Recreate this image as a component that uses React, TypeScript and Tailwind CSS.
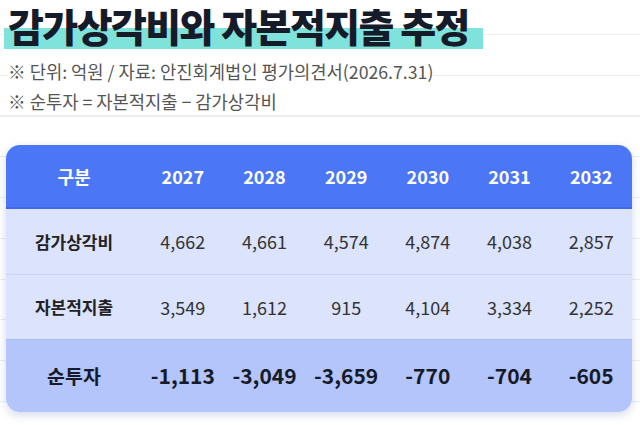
import React from "react";

const years = ["2027", "2028", "2029", "2030", "2031", "2032"];
const dep = ["4,662", "4,661", "4,574", "4,874", "4,038", "2,857"];
const capex = ["3,549", "1,612", "915", "4,104", "3,334", "2,252"];
const net = ["-1,113", "-3,049", "-3,659", "-770", "-704", "-605"];

export default function App() {
  return (
    <div className="w-[640px] h-[425px] overflow-hidden bg-white bg-[repeating-linear-gradient(to_bottom,transparent_0px,transparent_34px,#eeeeee_34px,#eeeeee_35px,transparent_35px,transparent_40.75px)] font-['Noto_Sans_CJK_KR','Noto_Sans',sans-serif]">
      <div className="pl-[4px] flex">
        <h1 className="flex items-center pl-[4px] pr-[14px] h-[50px] text-[39px] font-black tracking-[-0.04em] text-[#161b29] bg-[linear-gradient(to_bottom,transparent_28px,#7fe3dc_28px,#7fe3dc_49px,transparent_49px)] whitespace-nowrap">
          <span className="block leading-[1]">감가상각비와 자본적지출 추정</span>
        </h1>
      </div>
      <div className="mt-[6px] pl-[8px] text-[17.7px] leading-[30px] text-[#555555]">
        <p>
          <span className="bg-white">※ 단위: 억원 / 자료: 안진회계법인 평가의견서(2026.7.31)</span>
        </p>
        <p>
          <span className="bg-white">※ 순투자 = 자본적지출 − 감가상각비</span>
        </p>
      </div>
      <div className="mt-[29px] ml-[6px] w-[626px] rounded-[14px] overflow-hidden shadow-[0_3px_10px_rgba(60,80,160,0.22)]">
        <div className="grid grid-cols-[136px_repeat(6,1fr)] h-[64px] items-center bg-[#4b77f6] border-b-[2px] border-[#3f69e6] text-white text-[18px] font-bold">
          <div className="text-center">구분</div>
          {years.map((y) => (
            <div key={y} className="text-center">{y}</div>
          ))}
        </div>
        <div className="grid grid-cols-[136px_repeat(6,1fr)] h-[66px] items-center bg-[#dce3fd] border-b border-[#cbd5f6] text-[18px] text-[#333333]">
          <div className="text-center font-bold text-[17px] text-[#222222]">감가상각비</div>
          {dep.map((v, i) => (
            <div key={i} className="text-center">{v}</div>
          ))}
        </div>
        <div className="grid grid-cols-[136px_repeat(6,1fr)] h-[65px] items-center bg-[#dce3fd] border-b border-[#a9bdf8] text-[18px] text-[#333333]">
          <div className="text-center font-bold text-[17px] text-[#222222]">자본적지출</div>
          {capex.map((v, i) => (
            <div key={i} className="text-center">{v}</div>
          ))}
        </div>
        <div className="grid grid-cols-[136px_repeat(6,1fr)] h-[72px] items-center bg-[#b3c5fb] text-[21px] font-bold text-[#161b29]">
          <div className="text-center text-[19.5px]">순투자</div>
          {net.map((v, i) => (
            <div key={i} className="text-center">{v}</div>
          ))}
        </div>
      </div>
    </div>
  );
}
